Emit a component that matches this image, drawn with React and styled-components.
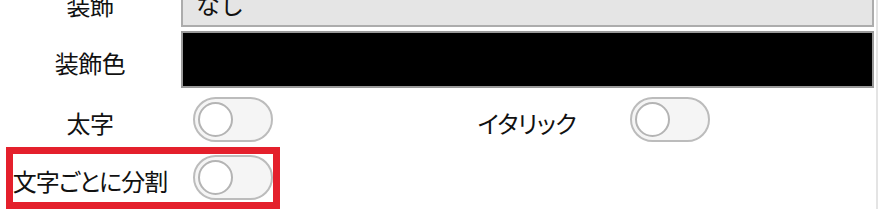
import React from 'react'
import styled, { createGlobalStyle } from 'styled-components';

const GlobalStyle = createGlobalStyle`
    html, body {
        margin: 0;
        padding: 0;
        background: #fff;
    }
    body {
        font-family: "Noto Sans CJK JP", "Noto Sans", sans-serif;
        color: #111;
    }
`

function Toggle() {
    return (
        <Track>
            <Knob />
        </Track>
    )
}

function App() {
    return (
        <Page>
            <GlobalStyle />
            <Form>
                <Row height={50}>
                    <Label>装飾</Label>
                    <Select>
                        <span>なし</span>
                        <Chevron viewBox="0 0 10 6">
                            <path d="M1 1 L5 5 L9 1" fill="none" stroke="#333" strokeWidth="1.6" />
                        </Chevron>
                    </Select>
                </Row>
                <Row height={57} gap={4}>
                    <Label>装飾色</Label>
                    <ColorBox />
                </Row>
                <Row height={45} gap={9}>
                    <Pair>
                        <Label>太字</Label>
                        <Toggle />
                    </Pair>
                    <Pair>
                        <Label>イタリック</Label>
                        <Toggle />
                    </Pair>
                </Row>
                <Row height={45} gap={13}>
                    <Highlight>
                        <Label tight>文字ごとに分割</Label>
                        <Toggle />
                    </Highlight>
                </Row>
            </Form>
        </Page>
    )
}

export default App

const Page = styled.div`
    width: 878px;
    height: 209px;
    overflow: hidden;
    box-sizing: border-box;
    border-right: 2px solid #e4e4e4;
`
const Form = styled.div`
    display: flex;
    flex-direction: column;
    margin-top: -23px;
`
const Row = styled.div`
    display: flex;
    align-items: center;
    height: ${p => p.height}px;
    margin-top: ${p => p.gap || 0}px;
`
const Pair = styled.div`
    display: flex;
    align-items: center;
    width: 437px;
`
const Highlight = styled.div`
    display: flex;
    align-items: center;
    position: relative;
    height: 100%;

    &::after {
        content: "";
        position: absolute;
        top: -8px;
        left: 6px;
        width: 274px;
        height: 62px;
        box-sizing: border-box;
        border: 7px solid #e4202c;
        pointer-events: none;
    }
`
const Label = styled.div`
    width: 180px;
    flex-shrink: 0;
    text-align: center;
    font-size: 24px;
    line-height: 1;
    padding-top: 6px;
    font-feature-settings: "palt";
    letter-spacing: ${p => (p.tight ? '-1px' : '-0.5px')};
`
const Select = styled.div`
    display: flex;
    align-items: center;
    justify-content: space-between;
    box-sizing: border-box;
    width: 693px;
    height: 50px;
    margin-left: 1px;
    padding: 0 16px 0 13px;
    background: #e5e5e5;
    border: 2px solid #acacac;
    font-size: 24px;

    span {
        padding-top: 2px;
    }
`
const Chevron = styled.svg`
    width: 10px;
    height: 6px;
    margin-top: -28px;
`
const ColorBox = styled.div`
    box-sizing: border-box;
    width: 693px;
    height: 57px;
    margin-left: 1px;
    background: #000;
    border: 2px solid #9a9a9a;
`
const Track = styled.div`
    display: flex;
    align-items: center;
    box-sizing: border-box;
    width: 80px;
    height: 45px;
    margin-left: 13px;
    padding-left: 3px;
    border-radius: 23px;
    border: 2px solid #bcbcbc;
    background: #f5f5f5;
`
const Knob = styled.div`
    box-sizing: border-box;
    width: 35px;
    height: 35px;
    border-radius: 50%;
    background: #fff;
    border: 2px solid #b4b4b4;
`
